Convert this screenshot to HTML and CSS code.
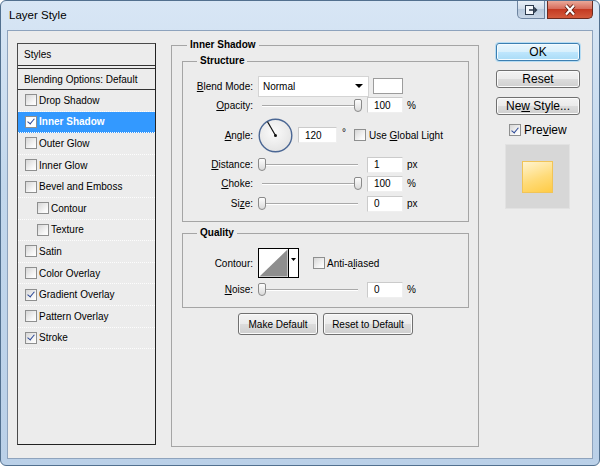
FILE: index.html
```html
<!DOCTYPE html>
<html lang="en">
<head>
    <meta charset="UTF-8">
    <meta name="viewport" content="width=device-width, initial-scale=1.0">
    <title>Layer Style</title>

    <link rel="stylesheet" href="styles.css">
</head>
<body>

    <div class="window">
        <div class="titlebar">
            <span class="title">Layer Style</span>
            <div class="caption">
                <span class="cap-btn cap-dock">
                    <svg width="14" height="12" viewBox="0 0 14 12">
                        <rect x="1.5" y="1.5" width="8" height="9" fill="#f4f7fb" stroke="#2c3a4c"/>
                        <path d="M5 6 H12 M10 3.5 L12.5 6 L10 8.5" fill="none" stroke="#2c3a4c" stroke-width="1.4"/>
                    </svg>
                </span>
                <span class="cap-btn cap-close">
                    <svg width="14" height="12" viewBox="0 0 14 12">
                        <path d="M3 1.5 L11 10.5 M11 1.5 L3 10.5" stroke="#5b1a0e" stroke-width="4"/>
                        <path d="M3 1.5 L11 10.5 M11 1.5 L3 10.5" stroke="#fff" stroke-width="2.2"/>
                    </svg>
                </span>
            </div>
        </div>

        <div class="client">
            <!-- left list of effects -->
            <div class="styles-panel">
                <div class="panel-head">Styles</div>
                <div class="panel-blend">Blending Options: Default</div>
                <ul class="style-list">
                    <li><span class="cb"></span>Drop Shadow</li>
                    <li class="selected"><span class="cb on"></span>Inner Shadow</li>
                    <li><span class="cb"></span>Outer Glow</li>
                    <li><span class="cb"></span>Inner Glow</li>
                    <li><span class="cb"></span>Bevel and Emboss</li>
                    <li class="sub"><span class="cb"></span>Contour</li>
                    <li class="sub"><span class="cb"></span>Texture</li>
                    <li><span class="cb"></span>Satin</li>
                    <li><span class="cb"></span>Color Overlay</li>
                    <li><span class="cb on"></span>Gradient Overlay</li>
                    <li><span class="cb"></span>Pattern Overlay</li>
                    <li><span class="cb on"></span>Stroke</li>
                </ul>
            </div>

            <!-- settings -->
            <fieldset class="group outer">
                <legend>Inner Shadow</legend>

                <fieldset class="group inner structure">
                    <legend>Structure</legend>

                    <div class="row row-blend">
                        <span class="row-label"><u>B</u>lend Mode:</span>
                        <div class="select"><span>Normal</span><span class="arrow"></span></div>
                        <span class="swatch"></span>
                    </div>

                    <div class="row row-opacity">
                        <span class="row-label"><u>O</u>pacity:</span>
                        <div class="slider max"><span class="thumb"></span></div>
                        <span class="field">100</span>
                        <span class="unit">%</span>
                    </div>

                    <div class="row row-angle">
                        <span class="row-label"><u>A</u>ngle:</span>
                        <svg class="dial" width="35" height="35" viewBox="0 0 35 35">
                            <defs>
                                <radialGradient id="dialFill" cx="45%" cy="40%" r="65%">
                                    <stop offset="0" stop-color="#fbfbfb"/>
                                    <stop offset="1" stop-color="#e2e2e2"/>
                                </radialGradient>
                            </defs>
                            <circle cx="17.5" cy="17.5" r="16.3" fill="url(#dialFill)" stroke="#4b6794" stroke-width="1.4"/>
                            <line x1="17.5" y1="17.5" x2="9.5" y2="3.8" stroke="#111" stroke-width="1.2"/>
                            <circle cx="17.5" cy="17.5" r="1.5" fill="#111"/>
                        </svg>
                        <span class="field field-angle">120</span>
                        <span class="unit deg">°</span>
                        <span class="cb cb-global"></span>
                        <span>Use <u>G</u>lobal Light</span>
                    </div>

                    <div class="row row-distance">
                        <span class="row-label"><u>D</u>istance:</span>
                        <div class="slider"><span class="thumb"></span></div>
                        <span class="field">1</span>
                        <span class="unit">px</span>
                    </div>

                    <div class="row">
                        <span class="row-label"><u>C</u>hoke:</span>
                        <div class="slider max"><span class="thumb"></span></div>
                        <span class="field">100</span>
                        <span class="unit">%</span>
                    </div>

                    <div class="row row-size">
                        <span class="row-label">Si<u>z</u>e:</span>
                        <div class="slider"><span class="thumb"></span></div>
                        <span class="field">0</span>
                        <span class="unit">px</span>
                    </div>
                </fieldset>

                <fieldset class="group inner quality">
                    <legend>Quality</legend>

                    <div class="row row-contour">
                        <span class="row-label">Contour:</span>
                        <svg class="contour" width="41" height="30" viewBox="0 0 41 30">
                            <rect x="0.5" y="0.5" width="40" height="29" fill="#fff" stroke="#000"/>
                            <polygon points="1.5,28.5 29.5,1.5 29.5,28.5" fill="#8e8e8e"/>
                            <line x1="30.5" y1="0" x2="30.5" y2="30" stroke="#000"/>
                            <polygon points="33,10 38,10 35.5,13" fill="#000"/>
                        </svg>
                        <span class="cb cb-anti"></span>
                        <span>Anti-a<u>l</u>iased</span>
                    </div>

                    <div class="row row-noise">
                        <span class="row-label"><u>N</u>oise:</span>
                        <div class="slider"><span class="thumb"></span></div>
                        <span class="field">0</span>
                        <span class="unit">%</span>
                    </div>
                </fieldset>

                <div class="defaults">
                    <button class="btn btn-make">Make Default</button>
                    <button class="btn btn-reset">Reset to Default</button>
                </div>
            </fieldset>

            <!-- dialog buttons -->
            <div class="side">
                <button class="btn btn-side default">OK</button>
                <button class="btn btn-side">Reset</button>
                <button class="btn btn-side"><span>Ne<u>w</u> Style...</span></button>
                <div class="preview-toggle"><span class="cb on"></span><span>Pre<u>v</u>iew</span></div>
                <div class="preview-box"><span class="preview-swatch"></span></div>
            </div>
        </div>
    </div>

</body>
</html>
```

FILE: styles.css
```css
* {
    box-sizing: border-box;
}

body {
    margin: 0;
    font-family: 'Liberation Sans', Arial, sans-serif;
    font-size: 10px;
    color: #000;
    background: #fff;
}

u {
    text-decoration-thickness: 1px;
    text-underline-offset: 1px;
}

/* window frame */

.window {
    width: 600px;
    height: 466px;
    border: 1px solid #52708f;
    border-radius: 6px;
    background: linear-gradient(#d8e6f5, #c2d7ec 40%, #bad0e8);
    padding: 0 6px 6px;
    display: flex;
    flex-direction: column;
}

.titlebar {
    height: 29px;
    display: flex;
    align-items: flex-start;
}

.title {
    margin: 7px 0 0 2px;
    font-size: 11.5px;
    line-height: 14px;
    color: #000;
}

.caption {
    margin-left: auto;
    display: flex;
    gap: 2px;
}

.cap-btn {
    height: 18px;
    display: flex;
    align-items: center;
    justify-content: center;
}

.cap-dock {
    width: 28px;
    border: 1px solid #6d84a0;
    border-top: none;
    border-radius: 0 0 0 5px;
    background: linear-gradient(#e8eff7, #d0dcea 45%, #b7c9dd 50%, #c8d6e6);
}

.cap-close {
    width: 46px;
    border: 1px solid #6b2a1f;
    border-top: none;
    border-radius: 0 0 5px 0;
    background: linear-gradient(#eaa898, #d76d5c 45%, #c43a22 50%, #d35a3c);
}

.client {
    flex: 1;
    display: flex;
    align-items: flex-start;
    padding: 8px 12px 0 9px;
    background: #ececec;
    border: 1px solid #8ea3bd;
}

/* checkbox */

.cb {
    width: 12px;
    height: 12px;
    flex-shrink: 0;
    border: 1px solid #8e8f8f;
    background: linear-gradient(135deg, #d6d6d6, #f7f7f7 70%, #fff);
    display: inline-flex;
    align-items: center;
    justify-content: center;
    margin-right: 2px;
}

.cb.on::after {
    content: "";
    width: 3px;
    height: 6px;
    margin-top: -2px;
    border: solid #2a4796;
    border-width: 0 1.5px 1.5px 0;
    transform: rotate(40deg);
}

/* styles list */

.styles-panel {
    margin-top: 4px;
    width: 139px;
    height: 402px;
    border: 1px solid #333;
    border-color: #4a4a4a #222 #222 #4a4a4a;
}

.panel-head {
    height: 22px;
    padding-left: 6px;
    display: flex;
    align-items: center;
    border-bottom: 1px solid #333;
}

.panel-blend {
    height: 22px;
    margin-top: 2px;
    padding-left: 6px;
    display: flex;
    align-items: center;
    border-top: 1px solid #333;
    border-bottom: 1px solid #333;
}

.style-list {
    list-style: none;
    margin: 0;
    padding: 0;
}

.style-list li {
    height: 21.6px;
    padding-left: 7px;
    display: flex;
    align-items: center;
    border-bottom: 1px dotted #fdfdfd;
}

.style-list li.sub {
    padding-left: 19px;
}

.style-list li.selected {
    background: #3399ff;
    color: #fff;
    font-weight: bold;
}

.style-list li.selected .cb {
    background: #fff;
}

/* group boxes */

.group {
    margin: 0;
    min-width: 0;
    border: 1px solid #a5a5a5;
}

.group legend {
    padding: 0 3px;
    font-weight: bold;
    line-height: 12px;
}

.outer {
    margin-left: 15px;
    width: 308px;
    height: 408px;
    padding: 4px 9px 0 10px;
}

.outer > legend {
    margin-left: 5px;
}

.inner {
    padding: 9px 0 8px 0;
}

.inner > legend {
    margin-left: 14px;
}

.quality {
    margin-top: 5px;
}

/* rows */

.row {
    display: flex;
    align-items: center;
    height: 19px;
}

.row-label {
    width: 70px;
    flex-shrink: 0;
    text-align: right;
    margin-right: 5px;
}

.row-blend {
    height: 20px;
}

.row-opacity {
    height: 18px;
}

.row-angle {
    height: 34px;
    margin-top: 4px;
}

.row-distance {
    margin-top: 3px;
}

.row-size {
    margin-top: 1px;
}

.row-contour {
    height: 30px;
}

.row-noise {
    margin-top: 2px;
}

.select {
    width: 111px;
    height: 21px;
    display: flex;
    align-items: center;
    padding-left: 4px;
    background: #fff;
    border: 1px solid #d4d4d4;
}

.arrow {
    margin-left: auto;
    margin-right: 5px;
    width: 0;
    height: 0;
    border-left: 4px solid transparent;
    border-right: 4px solid transparent;
    border-top: 4px solid #000;
}

.swatch {
    width: 30px;
    height: 16px;
    margin-left: 4px;
    background: #fff;
    border: 1px solid #9c9c9c;
}

.slider {
    width: 104px;
    height: 13px;
    margin-right: 5px;
    display: flex;
    align-items: center;
    background:
        linear-gradient(#a9a9a9, #a9a9a9) 4px 6px / 96px 1px no-repeat,
        linear-gradient(#fff, #fff) 4px 7px / 96px 1px no-repeat;
}

.slider.max {
    justify-content: flex-end;
}

.thumb {
    width: 8px;
    height: 13px;
    border: 1px solid #8a8a8a;
    border-radius: 2px 2px 4px 4px;
    background: linear-gradient(#fdfdfd, #dadada);
}

.field {
    width: 36px;
    height: 16px;
    padding-left: 6px;
    display: flex;
    align-items: center;
    background: #fff;
    border: 1px solid;
    border-color: #cbcbcb #efefef #efefef #cbcbcb;
}

.unit {
    margin-left: 4px;
}

.dial {
    margin-right: 5px;
    flex-shrink: 0;
}

.field-angle {
    width: 39px;
}

.deg {
    margin-left: 5px;
    align-self: flex-start;
    margin-top: 9px;
}

.cb-global {
    margin-left: 8px;
    margin-right: 3px;
}

.contour {
    flex-shrink: 0;
}

.cb-anti {
    margin-left: 14px;
}

/* buttons */

.btn {
    font-family: 'Liberation Sans', Arial, sans-serif;
    font-size: 10px;
    color: #000;
    padding: 0;
    border: 1px solid #707070;
    border-radius: 3px;
    background: linear-gradient(#f3f3f3 0%, #ebebeb 48%, #dcdcdc 52%, #cfcfcf 100%);
    box-shadow: inset 0 0 0 1px #fbfbfb;
    display: flex;
    align-items: center;
    justify-content: center;
}

.defaults {
    margin-top: 5px;
    display: flex;
    justify-content: center;
    gap: 5px;
}

.btn-make {
    width: 80px;
    height: 22px;
}

.btn-reset {
    width: 90px;
    height: 22px;
}

.side {
    margin-left: 17px;
    margin-top: 4px;
    width: 84px;
    display: flex;
    flex-direction: column;
}

.btn-side {
    height: 18px;
    margin-bottom: 9px;
    font-size: 12px;
}

.btn-side.default {
    border-color: #3c7fb1;
    background: linear-gradient(#eaf6fd 0%, #d9f0fc 48%, #bee6fd 52%, #a9dbf6 100%);
    box-shadow: inset 0 0 0 1px #f4fbff, 0 0 0 1px #b6dcf3;
}

.preview-toggle {
    margin: -1px 0 0 13px;
    height: 14px;
    display: flex;
    align-items: center;
    font-size: 12px;
}

.preview-toggle .cb {
    margin-right: 3px;
}

.preview-box {
    margin: 7px 0 0 9px;
    width: 65px;
    height: 65px;
    display: flex;
    align-items: center;
    justify-content: center;
    background: #d7d7d7;
    border: 1px solid #e2e2e2;
}

.preview-swatch {
    width: 31px;
    height: 32px;
    border: 1px solid #f1c457;
    background: linear-gradient(160deg, #fff4d0, #ffdb78 55%, #ffcb45);
}
```
